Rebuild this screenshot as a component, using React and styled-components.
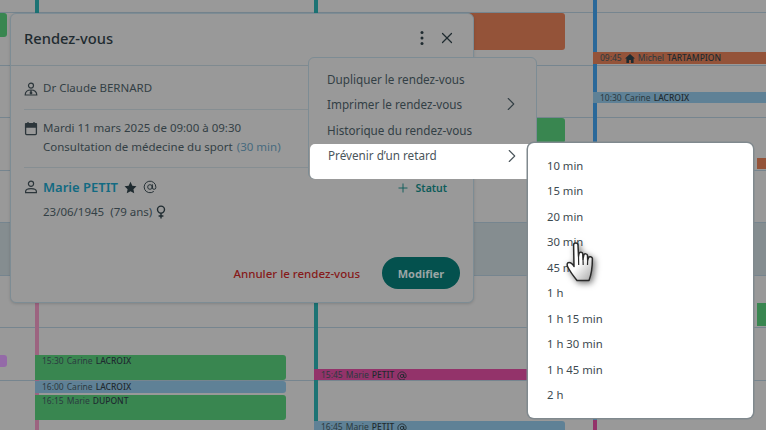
import React from "react";
import styled, { createGlobalStyle } from "styled-components";
import { AtSign, ChevronRight, Plus, X } from "lucide-react";

const GlobalStyle = createGlobalStyle`
    html, body {
        margin: 0;
        padding: 0;
        background: #999999;
    }
    body {
        font-family: "Noto Sans", "Open Sans", sans-serif;
    }
`;

// Calendar data (the place of each event on the agenda is its content)
const events = [
    { col: 0, top: 13, left: -60, width: 67, height: 24, color: "#398650" },
    { col: 0, top: 355, left: -60, width: 67, height: 12, color: "#946aa8" },
    { col: 1, top: 355, left: 0, width: 251, height: 25, color: "#398650", time: "15:30", first: "Carine", last: "LACROIX" },
    { col: 1, top: 381, left: 0, width: 251, height: 12, color: "#5f8196", time: "16:00", first: "Carine", last: "LACROIX" },
    { col: 1, top: 395, left: 0, width: 251, height: 25, color: "#398650", time: "16:15", first: "Marie", last: "DUPONT" },
    { col: 2, top: 13, left: 0, width: 251, height: 37, color: "#945339" },
    { col: 2, top: 118, left: 0, width: 251, height: 25, color: "#398650" },
    { col: 2, top: 369, left: 0, width: 251, height: 11, color: "#93336a", time: "15:45", first: "Marie", last: "PETIT", at: true },
    { col: 2, top: 421, left: 0, width: 251, height: 12, color: "#5f8196", time: "16:45", first: "Marie", last: "PETIT", at: true },
    { col: 3, top: 52, left: 0, width: 176, height: 12, color: "#945339", time: "09:45", home: true, first: "Michel", last: "TARTAMPION" },
    { col: 3, top: 92, left: 0, width: 176, height: 11, color: "#5f8196", time: "10:30", first: "Carine", last: "LACROIX" },
    { col: 3, top: 158, left: 164, width: 12, height: 11, color: "#945339" },
    { col: 3, top: 303, left: 164, width: 12, height: 23, color: "#398650" },
];

const bars = [
    { col: 1, top: 0, height: 13, color: "#1c7374" },
    { col: 1, top: 13, height: 417, color: "#9c6480" },
    { col: 2, top: 0, height: 430, color: "#1c7374" },
    { col: 3, top: 0, height: 420, color: "#2a6899" },
    { col: 3, top: 420, height: 10, color: "#93336a" },
];

const delays = [
    "10 min", "15 min", "20 min", "30 min", "45 min", "1 h",
    "1 h 15 min", "1 h 30 min", "1 h 45 min", "2 h",
];

const HandCursor = () => (
    <Hand width="34" height="46" viewBox="0 0 34 46">
        <defs>
            <linearGradient id="palm" x1="0.2" y1="0.2" x2="0.8" y2="1">
                <stop offset="0.45" stopColor="#ffffff" />
                <stop offset="1" stopColor="#b5b5b5" />
            </linearGradient>
        </defs>
        <path
            d="M9.6 5 C9.6 2.4 14 2.4 14 5 L14.5 16 L15 13.5 C15.5 11.5 18.7 11.8 18.8 14 L19 19 L19.8 15 C20.2 13.2 23.4 13.6 23.5 15.6 L23.7 20 L24.6 17.6 C25.2 16 28.4 16.6 28.4 18.6 C28.4 26 27.6 34 25 40.5 L13 40.5 C9 35.5 6 31.5 3.8 27 C2.6 24.6 3 22.4 5 22.4 C7 22.4 9 24.5 10 26.5 Z"
            fill="url(#palm)"
            stroke="#2a2a2a"
            strokeWidth="1.5"
            strokeLinejoin="round"
        />
        <path d="M14.5 16 L14.7 25 M19 19 L19.2 25 M23.7 20 L23.5 25" stroke="#2a2a2a" strokeWidth="1.2" fill="none" />
    </Hand>
);

const DoctorIcon = () => (
    <svg width="14" height="14" viewBox="0 0 14 14" fill="none" stroke="#2c363b" strokeWidth="1.2">
        <circle cx="7" cy="3.6" r="2.5" />
        <path d="M1.2 13 C1.2 9.6 3.6 8 7 8 C10.4 8 12.8 9.6 12.8 13 Z" />
        <path d="M7 8 L7 10.5" />
        <circle cx="7" cy="11" r="0.8" fill="#2c363b" />
    </svg>
);

const PersonIcon = () => (
    <svg width="14" height="14" viewBox="0 0 14 14" fill="none" stroke="#2c363b" strokeWidth="1.2">
        <circle cx="7" cy="3.8" r="2.6" />
        <path d="M1.6 12.6 V11.6 C1.6 9.6 3.4 8.6 7 8.6 C10.6 8.6 12.4 9.6 12.4 11.6 V12.6 Z" />
    </svg>
);

const CalendarIcon = () => (
    <svg width="14" height="15" viewBox="0 0 14 15" fill="none" stroke="#2c363b" strokeWidth="1.3">
        <rect x="1.6" y="2.6" width="10.8" height="11" rx="1" />
        <path d="M1.6 3 H12.4 V6 H1.6 Z" fill="#2c363b" />
        <path d="M4 1 V3 M10 1 V3" />
    </svg>
);

const StarIcon = () => (
    <svg width="13" height="13" viewBox="0 0 24 24" fill="#1f2b30">
        <path d="M12 1.5 L15.4 8.6 L23 9.6 L17.4 15 L18.9 22.8 L12 19 L5.1 22.8 L6.6 15 L1 9.6 L8.6 8.6 Z" />
    </svg>
);

const VenusIcon = () => (
    <svg width="10" height="14" viewBox="0 0 10 14" fill="none" stroke="#1f2b30" strokeWidth="1.4">
        <circle cx="5" cy="4.6" r="3.5" />
        <path d="M5 8 V13.4 M2.6 11 H7.4" />
    </svg>
);

const HomeIcon = () => (
    <svg width="10" height="9" viewBox="0 0 10 9" fill="#1f2b30">
        <path d="M5 0 L10 4.5 H8.6 V9 H6 V6 H4 V9 H1.4 V4.5 H0 Z" />
    </svg>
);

const KebabIcon = () => (
    <svg width="4" height="16" viewBox="0 0 4 16" fill="#1f2b30">
        <circle cx="2" cy="2.5" r="1.5" />
        <circle cx="2" cy="8" r="1.5" />
        <circle cx="2" cy="13.5" r="1.5" />
    </svg>
);

const App = () => {
    return (
        <Page>
            <GlobalStyle />

            {/* Agenda behind the dialog */}
            <Slots>
                {Array.from({ length: 8 }).map((_, i) => (
                    <Slot key={i} $closed={i === 4} />
                ))}
            </Slots>
            <Columns>
                {[0, 1, 2, 3].map((col) => (
                    <Column key={col}>
                        {bars
                            .filter((b) => b.col === col)
                            .map((b) => (
                                <Bar key={b.top} $top={b.top} $height={b.height} $color={b.color} />
                            ))}
                        {events
                            .filter((e) => e.col === col)
                            .map((e) => (
                                <Event
                                    key={e.top}
                                    $top={e.top}
                                    $left={e.left}
                                    $width={e.width}
                                    $height={e.height}
                                    $color={e.color}
                                >
                                    {e.time && (
                                        <>
                                            <span>{e.time}</span>
                                            {e.home && <HomeIcon />}
                                            <span>{e.first}</span>
                                            <strong>{e.last}</strong>
                                            {e.at && <AtSign size={10} strokeWidth={2} color="#1f2b30" />}
                                        </>
                                    )}
                                </Event>
                            ))}
                    </Column>
                ))}
            </Columns>

            {/* Dialog */}
            <Dialog>
                <DialogHeader>
                    <Title>Rendez-vous</Title>
                    <HeaderActions>
                        <KebabIcon />
                        <X size={18} strokeWidth={1.6} color="#1f2b30" />
                    </HeaderActions>
                </DialogHeader>
                <DialogBody>
                    <Section $height={44} $pad={13}>
                        <IconCell $height={19}><DoctorIcon /></IconCell>
                        <Lines>
                            <Line>Dr Claude BERNARD</Line>
                        </Lines>
                    </Section>
                    <Section $height={58} $pad={9}>
                        <IconCell $height={19}><CalendarIcon /></IconCell>
                        <Lines>
                            <Line>Mardi 11 mars 2025 de 09:00 à 09:30</Line>
                            <Line>
                                <span>Consultation de médecine du sport</span>
                                <Duration>(30 min)</Duration>
                            </Line>
                        </Lines>
                    </Section>
                    <PatientSection>
                        <IconCell $height={20}><PersonIcon /></IconCell>
                        <Lines>
                            <PatientName>
                                <PatientLink>Marie PETIT</PatientLink>
                                <StarIcon />
                                <AtSign size={14} strokeWidth={1.6} color="#1f2b30" />
                            </PatientName>
                            <Line>
                                <BirthDate>23/06/1945</BirthDate>
                                <span>(79 ans)</span>
                                <VenusIcon />
                            </Line>
                        </Lines>
                        <StatusButton>
                            <Plus size={14} strokeWidth={1.6} />
                            Statut
                        </StatusButton>
                    </PatientSection>
                </DialogBody>
                <DialogFooter>
                    <CancelLink>Annuler le rendez-vous</CancelLink>
                    <PrimaryButton>Modifier</PrimaryButton>
                </DialogFooter>
            </Dialog>

            {/* Kebab menu */}
            <Menu>
                <MenuItem>Dupliquer le rendez-vous</MenuItem>
                <MenuItem>
                    Imprimer le rendez-vous
                    <ChevronRight size={22} strokeWidth={1.2} />
                </MenuItem>
                <MenuItem>Historique du rendez-vous</MenuItem>
                <ActiveItem>
                    Prévenir d’un retard
                    <ChevronRight size={22} strokeWidth={1.2} />
                </ActiveItem>
            </Menu>

            <SubMenu>
                {delays.map((d) => (
                    <SubItem key={d}>{d}</SubItem>
                ))}
            </SubMenu>

            <HandCursor />
        </Page>
    );
};

const Page = styled.div`
    position: relative;
    width: 766px;
    height: 430px;
    overflow: hidden;
    background: #999999;
`;

const Slots = styled.div`
    display: flex;
    flex-direction: column;
    padding-top: 12px;
`;

const Slot = styled.div`
    box-sizing: border-box;
    height: 52.5px;
    border-top: 1px solid #76858f;
    background: ${(p) => (p.$closed ? "#858d90" : "transparent")};
`;

const Columns = styled.div`
    position: absolute;
    inset: 0;
    display: grid;
    grid-template-columns: 35px 279px 279px 173px;
`;

const Column = styled.div`
    position: relative;
`;

const Bar = styled.div`
    position: absolute;
    left: 0;
    top: ${(p) => p.$top}px;
    width: 4px;
    height: ${(p) => p.$height}px;
    background: ${(p) => p.$color};
`;

const Event = styled.div`
    position: absolute;
    top: ${(p) => p.$top}px;
    left: ${(p) => p.$left}px;
    width: ${(p) => p.$width}px;
    height: ${(p) => p.$height}px;
    box-sizing: border-box;
    padding: 0 0 0 7px;
    display: flex;
    align-items: flex-start;
    gap: 3px;
    overflow: hidden;
    background: ${(p) => p.$color};
    border-radius: 0 3px 3px 0;
    color: #2b3a40;
    font-size: 8.5px;
    line-height: 12px;

    svg {
        flex: none;
        margin-top: 1.5px;
    }

    strong {
        font-weight: 500;
        color: #1f2b30;
    }
`;

const Dialog = styled.section`
    position: absolute;
    top: 13px;
    left: 10px;
    width: 464px;
    height: 290px;
    box-sizing: border-box;
    display: flex;
    flex-direction: column;
    background: #999999;
    border: 1px solid #7d8c94;
    border-radius: 6px;
    box-shadow: 0 1px 3px rgba(0, 0, 0, 0.15);
`;

const DialogHeader = styled.header`
    height: 52px;
    flex: none;
    box-sizing: border-box;
    display: flex;
    align-items: center;
    justify-content: space-between;
    padding: 0 17px 3px 13px;
    border-bottom: 1px solid #7f8a90;
`;

const Title = styled.h2`
    margin: 0;
    font-size: 14.7px;
    font-weight: 500;
    color: #1f2b30;
`;

const HeaderActions = styled.div`
    display: flex;
    align-items: center;
    gap: 14px;
`;

const DialogBody = styled.div`
    flex: 1;
    padding: 0 13px;
`;

const Section = styled.div`
    height: ${(p) => p.$height}px;
    box-sizing: border-box;
    padding-top: ${(p) => p.$pad}px;
    display: flex;
    align-items: flex-start;
    border-bottom: 1px solid #868e92;
`;

const PatientSection = styled.div`
    display: flex;
    align-items: flex-start;
    padding-top: 9px;
`;

const IconCell = styled.div`
    width: 19px;
    height: ${(p) => p.$height}px;
    flex: none;
    display: flex;
    align-items: center;
`;

const Lines = styled.div`
    flex: 1;
    display: flex;
    flex-direction: column;
`;

const Line = styled.div`
    display: flex;
    align-items: center;
    gap: 4px;
    font-size: 11.5px;
    line-height: 18.5px;
    color: #333f45;
    white-space: pre;
`;

const Duration = styled.span`
    color: #476a7e;
`;

const BirthDate = styled.span`
    margin-right: 2px;
`;

const PatientName = styled.div`
    display: flex;
    align-items: center;
    gap: 6px;
    height: 20px;
    margin-bottom: 6px;
`;

const PatientLink = styled.span`
    font-size: 13px;
    font-weight: 600;
    color: #126a82;
`;

const StatusButton = styled.div`
    display: flex;
    align-items: center;
    gap: 6px;
    margin: 4px 13px 0 0;
    font-size: 10.5px;
    font-weight: 600;
    color: #0d5c5a;
`;

const DialogFooter = styled.footer`
    display: flex;
    align-items: center;
    justify-content: flex-end;
    gap: 22px;
    padding: 0 13px 13px 0;
`;

const CancelLink = styled.span`
    font-size: 11.5px;
    font-weight: 500;
    color: #861a1a;
`;

const PrimaryButton = styled.div`
    width: 78px;
    height: 32px;
    display: flex;
    align-items: center;
    justify-content: center;
    border-radius: 16px;
    background: #04514e;
    color: #9aa5a5;
    font-size: 11px;
    font-weight: 700;
`;

const Menu = styled.nav`
    position: absolute;
    top: 57px;
    left: 308px;
    width: 229px;
    height: 122px;
    box-sizing: border-box;
    padding-top: 8px;
    display: flex;
    flex-direction: column;
    background: #999999;
    border: 1px solid #7d8c94;
    border-radius: 6px;
`;

const MenuItem = styled.div`
    height: 25.6px;
    flex: none;
    box-sizing: border-box;
    display: flex;
    align-items: center;
    justify-content: space-between;
    padding: 0 14px 0 18px;
    font-size: 11.7px;
    color: #333f45;
`;

const ActiveItem = styled(MenuItem)`
    position: absolute;
    top: 86px;
    left: 1px;
    width: 221px;
    height: 35px;
    align-items: flex-start;
    padding: 1px 8px 0 18px;
    line-height: 20px;
    background: #ffffff;
    border-radius: 5px 0 0 5px;
    color: #4a555b;
`;

const SubMenu = styled.ul`
    position: absolute;
    top: 143px;
    left: 528px;
    width: 225px;
    height: 275px;
    box-sizing: border-box;
    margin: 0;
    padding: 9.7px 0 0 19px;
    list-style: none;
    background: #ffffff;
    border-radius: 6px;
    box-shadow: 0 0 0 1.5px #80898e;
`;

const SubItem = styled.li`
    height: 25.5px;
    display: flex;
    align-items: center;
    font-size: 11.3px;
    color: #3d4a50;
`;

const Hand = styled.svg`
    position: absolute;
    top: 240px;
    left: 564px;
    filter: drop-shadow(2px 2px 3px rgba(0, 0, 0, 0.55));
`;

export default App;
